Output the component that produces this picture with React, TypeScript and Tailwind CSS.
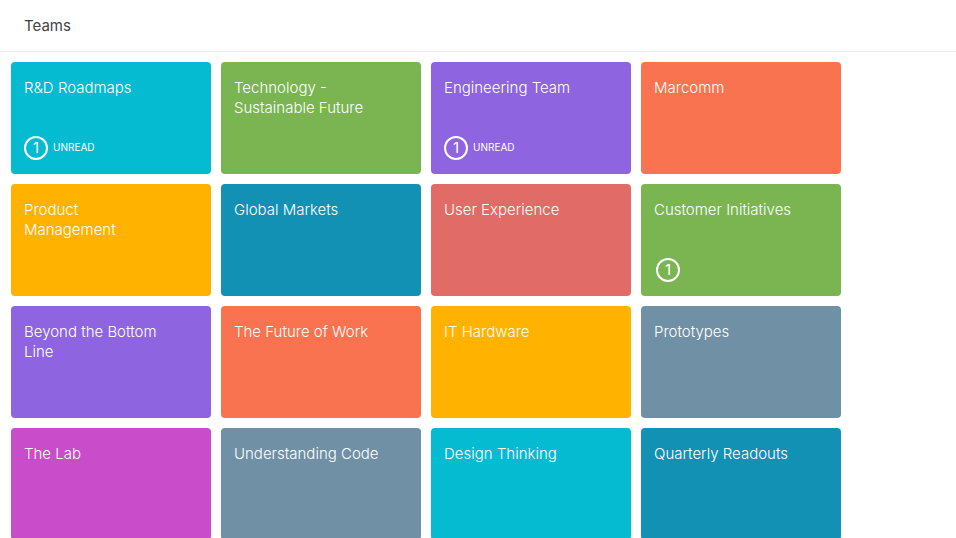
type Team = { name: string; color: string; unread?: number; label?: boolean };

const columns: Team[][] = [
  [
    { name: 'R&D Roadmaps', color: 'bg-[#05bbd1]', unread: 1, label: true },
    { name: 'Product Management', color: 'bg-[#ffb300]' },
    { name: 'Beyond the Bottom Line', color: 'bg-[#8e64e0]' },
    { name: 'The Lab', color: 'bg-[#c94ccb]' },
  ],
  [
    { name: 'Technology - Sustainable Future', color: 'bg-[#7ab551]' },
    { name: 'Global Markets', color: 'bg-[#1291b5]' },
    { name: 'The Future of Work', color: 'bg-[#f97350]' },
    { name: 'Understanding Code', color: 'bg-[#6f90a5]' },
  ],
  [
    { name: 'Engineering Team', color: 'bg-[#8e64e0]', unread: 1, label: true },
    { name: 'User Experience', color: 'bg-[#e06b67]' },
    { name: 'IT Hardware', color: 'bg-[#ffb300]' },
    { name: 'Design Thinking', color: 'bg-[#05bbd1]' },
  ],
  [
    { name: 'Marcomm', color: 'bg-[#f97350]' },
    { name: 'Customer Initiatives', color: 'bg-[#7ab551]', unread: 1 },
    { name: 'Prototypes', color: 'bg-[#6f90a5]' },
    { name: 'Quarterly Readouts', color: 'bg-[#1291b5]' },
  ],
];

function TeamCard({ team }: { team: Team }) {
  return (
    <a
      href="#"
      className={`flex h-28 w-full flex-col justify-between rounded px-[13px] pt-4 pb-[14px] text-white ${team.color}`}
    >
      <h2 className="max-w-[148px] text-[15px] leading-5 font-light">{team.name}</h2>
      {team.unread && (
        <div className={`flex items-center gap-[5px] ${team.label ? '' : 'pl-0.5'}`}>
          <span className="flex size-6 items-center justify-center rounded-full border-2 border-white text-[15px] leading-5">
            {team.unread}
          </span>
          {team.label && <span className="pb-0.5 text-[10px] leading-3">UNREAD</span>}
        </div>
      )}
    </a>
  );
}

export default function App() {
  return (
    <div className="h-screen overflow-hidden bg-white font-['Inter',sans-serif]">
      <header className="flex h-[52px] items-center border-b border-[#ececec] px-6">
        <h1 className="text-[15px] leading-5 text-[#444]">Teams</h1>
      </header>
      <main className="grid max-w-[852px] grid-cols-4 gap-[10px] px-[11px] pt-[10px]">
        {columns.map((column, i) => (
          <div key={i} className="flex flex-col gap-[10px]">
            {column.map((team) => (
              <TeamCard key={team.name} team={team} />
            ))}
          </div>
        ))}
      </main>
    </div>
  );
}
